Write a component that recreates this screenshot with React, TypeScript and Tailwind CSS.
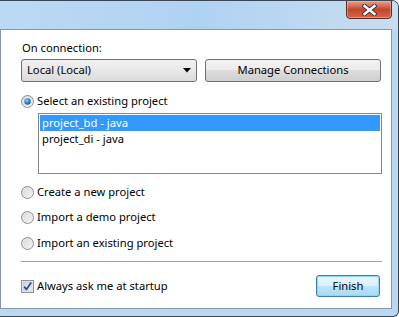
import React from "react";

function Radio({ checked }: { checked?: boolean }) {
  return (
    <svg width="13" height="13" viewBox="0 0 13 13" className="shrink-0">
      <defs>
        <linearGradient id="rg" x1="0" y1="0" x2="1" y2="1">
          <stop offset="0" stopColor="#d4d4d4" />
          <stop offset="1" stopColor="#f8f8f8" />
        </linearGradient>
        <radialGradient id="dot" cx="0.4" cy="0.35" r="0.7">
          <stop offset="0" stopColor="#9ad6f6" />
          <stop offset="0.5" stopColor="#2a8fd1" />
          <stop offset="1" stopColor="#0d4e8a" />
        </radialGradient>
      </defs>
      <circle cx="6.5" cy="6.5" r="6" fill="url(#rg)" stroke="#8e8f8f" strokeWidth="1" />
      <circle cx="6.5" cy="6.5" r="4.2" fill="none" stroke="#e8e8e8" strokeWidth="0.8" />
      {checked && <circle cx="6.5" cy="6.5" r="3.2" fill="url(#dot)" />}
    </svg>
  );
}

function Checkbox() {
  return (
    <svg width="13" height="13" viewBox="0 0 13 13" className="shrink-0">
      <defs>
        <linearGradient id="cg" x1="0" y1="0" x2="1" y2="1">
          <stop offset="0" stopColor="#cbcfd5" />
          <stop offset="1" stopColor="#f6f6f6" />
        </linearGradient>
      </defs>
      <rect x="0.5" y="0.5" width="12" height="12" fill="#f4f4f4" stroke="#8e8f8f" />
      <rect x="2" y="2" width="9" height="9" fill="url(#cg)" stroke="#b8bcc4" strokeWidth="0.6" />
      <path d="M3.2 6.6 L5.4 9.4 L10.2 2.6" fill="none" stroke="#2a4fa8" strokeWidth="1.8" strokeLinejoin="round" />
    </svg>
  );
}

export default function App() {
  const font = { fontFamily: '"Noto Sans", "Open Sans", sans-serif' };
  return (
    <div
      className="w-[399px] h-[317px] flex flex-col bg-[#bcd7f0] border-r border-b border-t border-[#3a4654] rounded-tr-[7px] rounded-br-[6px] overflow-hidden text-[11.2px] text-black"
      style={font}
    >
      {/* title bar */}
      <div className="h-[28px] shrink-0 flex justify-end pr-[6px] bg-gradient-to-r from-[#bcd9f4] via-[#b0d2f2] to-[#c8ddf0]">
        <div className="w-[46px] h-[19px] -mt-px rounded-b-[4px] border border-[#5e2b22] bg-gradient-to-b from-[#e2a18f] via-[#c4452e] to-[#d8654a] flex items-center justify-center shadow-[inset_0_0_0_1px_rgba(255,200,190,0.45)]">
          <svg width="15" height="12" viewBox="0 0 15 12">
            <path d="M2.5 2 L12.5 10 M12.5 2 L2.5 10" stroke="#40302c" strokeWidth="4.2" strokeLinecap="square" />
            <path d="M2.5 2 L12.5 10 M12.5 2 L2.5 10" stroke="#ffffff" strokeWidth="2.4" strokeLinecap="square" />
          </svg>
        </div>
      </div>

      {/* content */}
      <div className="flex-1 flex flex-col bg-white border border-[#8497ae] mr-[6px] mb-[7px] pl-[20px] pr-[10px] pt-[10px]">
        <div className="leading-[16px] pl-px">On connection:</div>

        <div className="flex mt-[3px] gap-[8px]">
          <div className="w-[176px] h-[23px] rounded-[3px] border border-[#707070] bg-gradient-to-b from-[#f2f2f2] to-[#dcdcdc] flex items-center justify-between pl-[5px] pr-[5px]">
            <span>Local (Local)</span>
            <svg width="8" height="5" viewBox="0 0 8 5">
              <path d="M0 0 H8 L4 4.5 Z" fill="#000" />
            </svg>
          </div>
          <div className="w-[176px] h-[23px] rounded-[3px] border border-[#707070] bg-[linear-gradient(#f2f2f2,#ebebeb_50%,#dddddd_50%,#cfcfcf)] flex items-center justify-center">
            Manage Connections
          </div>
        </div>

        <div className="flex items-center gap-[3px] mt-[11px] h-[16px] leading-[16px]">
          <Radio checked />
          <span>Select an existing project</span>
        </div>

        <div className="ml-[17px] mt-[4px] h-[61px] w-[344px] border border-[#828790] bg-white p-px leading-[16px]">
          <div className="bg-[#3399ff] text-white pl-[2px] h-[16px]">project_bd - java</div>
          <div className="pl-[2px] h-[16px]">project_di - java</div>
        </div>

        <div className="flex items-center gap-[3px] mt-[10px] h-[16px] leading-[16px]">
          <Radio />
          <span>Create a new project</span>
        </div>
        <div className="flex items-center gap-[3px] mt-[9px] h-[16px] leading-[16px]">
          <Radio />
          <span>Import a demo project</span>
        </div>
        <div className="flex items-center gap-[3px] mt-[10px] h-[16px] leading-[16px]">
          <Radio />
          <span>Import an existing project</span>
        </div>

        <div className="mt-[10px] h-px w-[361px] bg-[#a0a0a0]" />

        <div className="flex items-center justify-between mt-[13px] w-[359px]">
          <div className="flex items-center gap-[3px] leading-[16px]">
            <Checkbox />
            <span>Always ask me at startup</span>
          </div>
          <div className="w-[64px] h-[22px] rounded-[3px] border border-[#3c7fb1] bg-[linear-gradient(#eaf6fd,#d9f0fc_50%,#bee6fd_50%,#a7d9f5)] shadow-[inset_0_0_0_1px_#8fd3f7] flex items-center justify-center">
            Finish
          </div>
        </div>
      </div>
    </div>
  );
}
